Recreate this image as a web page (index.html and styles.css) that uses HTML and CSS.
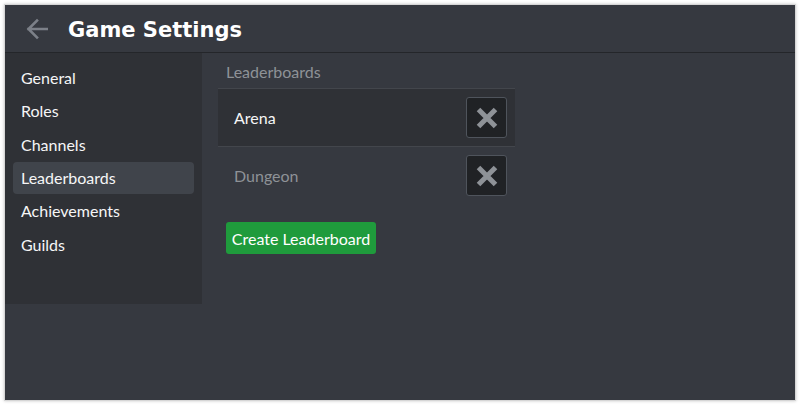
FILE: index.html
```html
<!DOCTYPE html>
<html>
<head>
<meta charset="utf-8">
<link rel="stylesheet" href="styles.css">
</head>
<body>
<div class="window">
  <header class="topbar">
    <svg class="back" width="22" height="22" viewBox="0 0 22 22" aria-hidden="true">
      <path d="M21 11H2.5M11 2.5L2.5 11L11 19.5" fill="none" stroke="#7c8088" stroke-width="2.6" stroke-linecap="square"/>
    </svg>
    <h1 class="title">Game Settings</h1>
  </header>
  <div class="main">
    <nav class="sidebar">
      <div class="nav-item">General</div>
      <div class="nav-item">Roles</div>
      <div class="nav-item">Channels</div>
      <div class="nav-item active">Leaderboards</div>
      <div class="nav-item">Achievements</div>
      <div class="nav-item">Guilds</div>
    </nav>
    <section class="content">
      <div class="section-title">Leaderboards</div>
      <div class="list">
        <div class="row selected">
          <span class="row-name">Arena</span>
          <button class="del" aria-label="Delete">
            <svg width="24" height="24" viewBox="0 0 24 24"><path d="M3.5 3.5L20.5 20.5M20.5 3.5L3.5 20.5" stroke="#8e9297" stroke-width="5" stroke-linecap="butt"/></svg>
          </button>
        </div>
        <div class="row">
          <span class="row-name dim">Dungeon</span>
          <button class="del" aria-label="Delete">
            <svg width="24" height="24" viewBox="0 0 24 24"><path d="M3.5 3.5L20.5 20.5M20.5 3.5L3.5 20.5" stroke="#8e9297" stroke-width="5" stroke-linecap="butt"/></svg>
          </button>
        </div>
      </div>
      <button class="create">Create Leaderboard</button>
    </section>
  </div>
</div>
</body>
</html>
```
FILE: styles.css
```css
* { box-sizing: border-box; }
html, body { margin: 0; padding: 0; }
body {
  background: #ffffff;
  font-family: Lato, "Noto Sans", sans-serif;
  padding: 5px;
  width: 800px;
  height: 405px;
}
.window {
  width: 790px;
  height: 395px;
  background: #363940;
  box-shadow: 0 0 0 1px #d6d6d6, 0 0 3px 1px #c8c8c8;
  display: flex;
  flex-direction: column;
}
.topbar {
  height: 48px;
  flex: none;
  display: flex;
  align-items: center;
  border-bottom: 1px solid #24262a;
  padding-left: 21px;
}
.back { display: block; margin-top: 1px; }
.title {
  margin: 3px 0 0 20px;
  font-family: "DejaVu Sans", Verdana, sans-serif;
  font-size: 21px;
  font-weight: 700;
  color: #ffffff;
}
.main {
  display: flex;
  align-items: flex-start;
  flex: 1;
}
.sidebar {
  width: 197px;
  height: 251px;
  flex: none;
  background: #2f3136;
  padding: 9px 8px 0 8px;
  display: flex;
  flex-direction: column;
  gap: 1.33px;
}
.nav-item {
  height: 32px;
  line-height: 32px;
  padding-left: 8px;
  border-radius: 4px;
  font-size: 16px;
  color: #f6f6f7;
}
.nav-item.active { background: #40444b; }
.content {
  padding: 9px 0 0 16px;
  width: 313px;
}
.section-title {
  height: 20px;
  line-height: 20px;
  padding-left: 8px;
  font-size: 16px;
  color: #8e9297;
  margin-bottom: 6px;
}
.row {
  height: 58px;
  border-top: 1px solid #43464c;
  display: flex;
  align-items: center;
  justify-content: space-between;
  padding: 0 8px 0 16px;
}
.row.selected { background: #2f3136; }
.row-name { font-size: 16px; color: #f6f6f7; }
.row-name.dim { color: #8e9297; }
.del {
  width: 41px;
  height: 41px;
  padding: 0;
  margin: 0;
  background: #202225;
  border: 1px solid #4f545c;
  border-radius: 3px;
  display: flex;
  align-items: center;
  justify-content: center;
}
.del svg { display: block; }
.create {
  margin: 18px 0 0 8px;
  width: 150px;
  height: 32px;
  padding: 0;
  border: none;
  border-radius: 3px;
  background: #1f9b3c;
  color: #ffffff;
  font-family: Lato, "Noto Sans", sans-serif;
  font-size: 16px;
}
```
